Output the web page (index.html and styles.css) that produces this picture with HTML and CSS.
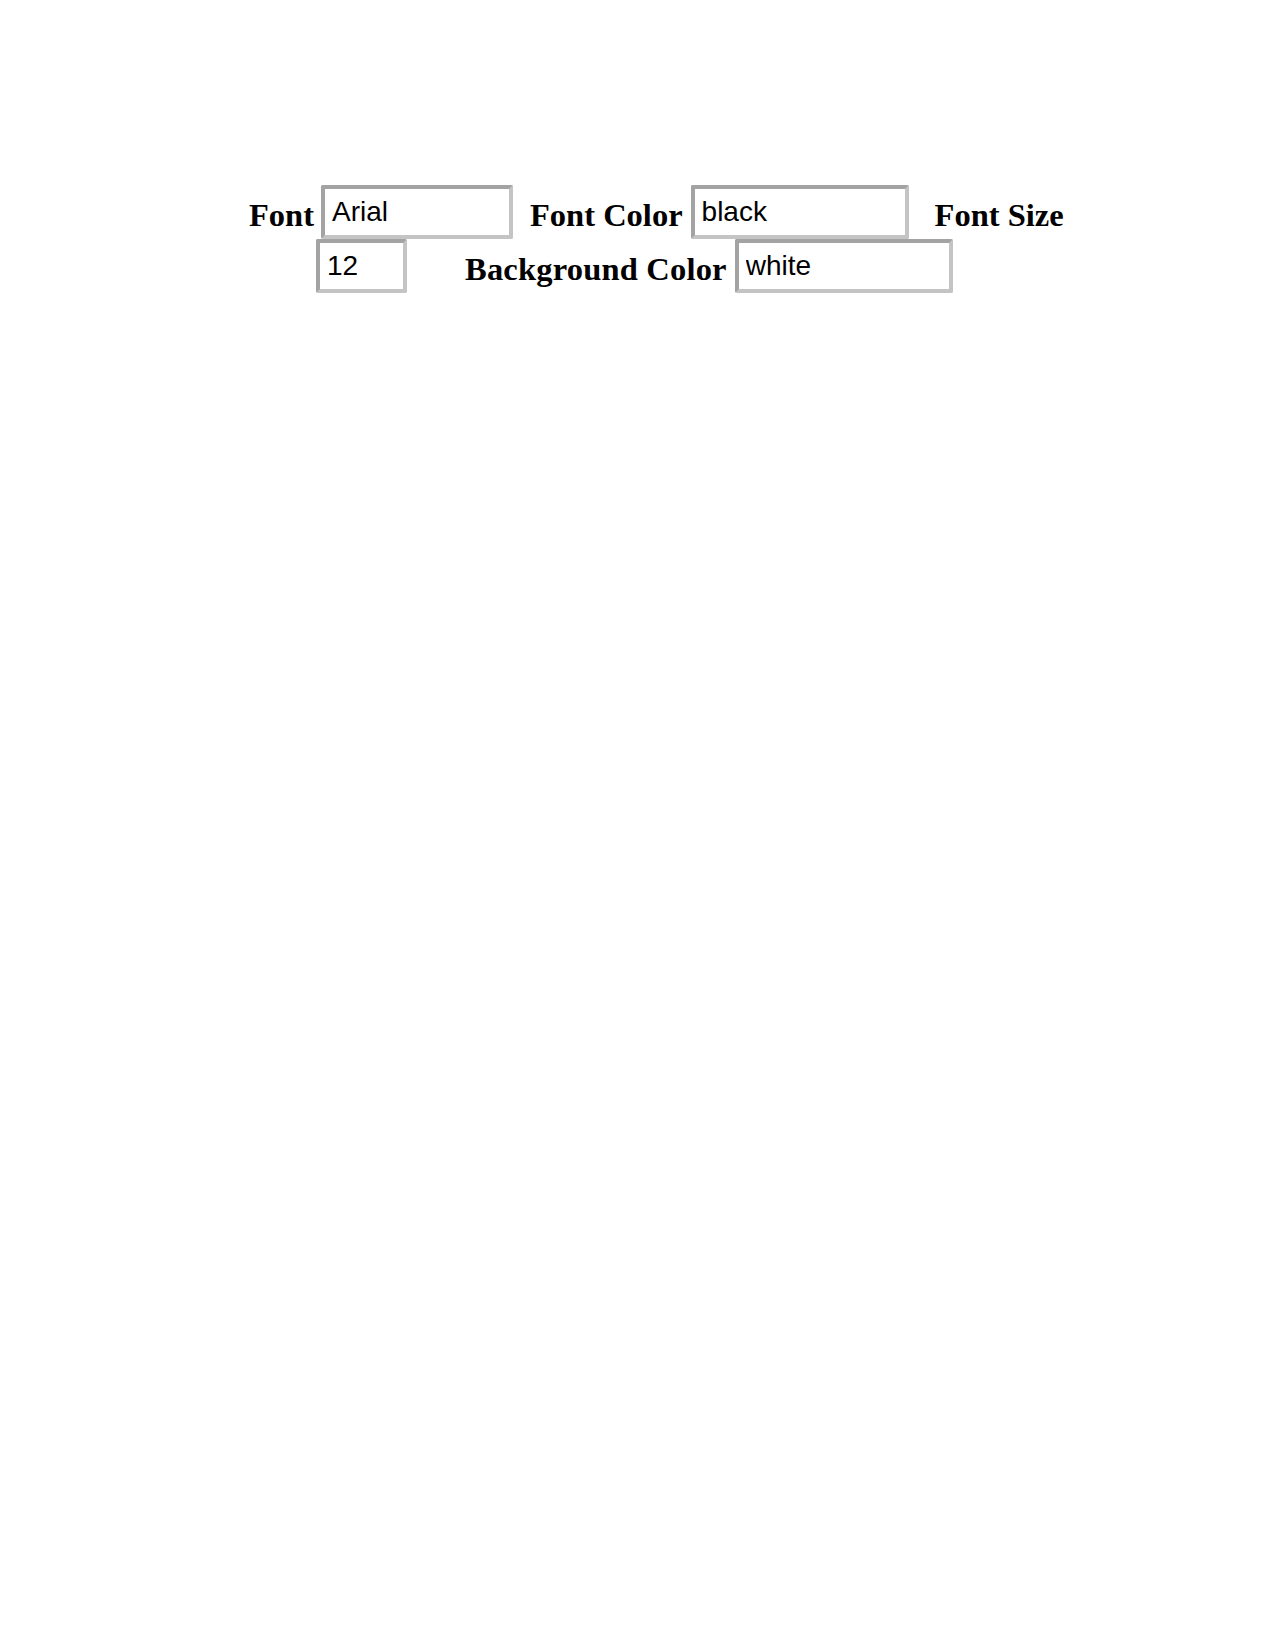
FILE: index.html
```html
<!DOCTYPE html>
<html>
<head>
<meta charset="utf-8">
<title>Text settings</title>
<link rel="stylesheet" href="styles.css">
</head>
<body>
<form class="settings">
  <div class="row row-first">
    <label class="field-label" for="font">Font</label>
    <input class="field field-font" id="font" type="text" value="Arial">
    <label class="field-label label-color" for="color">Font Color</label>
    <input class="field field-color" id="color" type="text" value="black">
    <label class="field-label label-size" for="size">Font Size</label>
  </div>
  <div class="row row-second">
    <input class="field field-size" id="size" type="text" value="12">
    <label class="field-label label-bg" for="bg">Background Color</label>
    <input class="field field-bg" id="bg" type="text" value="white">
  </div>
</form>
</body>
</html>
```
FILE: styles.css
```css
html, body {
  margin: 0;
  padding: 0;
  background: #ffffff;
}

.settings {
  padding-top: 185px;
  font-family: "Liberation Serif", "Times New Roman", serif;
  color: #000;
}

.row {
  display: flex;
  align-items: flex-start;
  height: 54px;
}

.row-first {
  padding-left: 249px;
}

.row-second {
  padding-left: 316px;
}

.field-label {
  font-weight: bold;
  font-size: 32.5px;
  line-height: 60px;
  white-space: nowrap;
}

.field {
  box-sizing: border-box;
  height: 54px;
  margin: 0;
  padding: 7px 7px;
  font-family: "Liberation Sans", Arial, sans-serif;
  font-size: 28px;
  line-height: 32px;
  color: #000;
  background: #fff;
  border: 4px solid;
  border-color: #a3a3a3 #c4c4c4 #c4c4c4 #a3a3a3;
  border-radius: 2px;
  outline: none;
}

.field-font {
  width: 192px;
  margin-left: 7px;
}

.label-color {
  margin-left: 17px;
}

.field-color {
  width: 218px;
  margin-left: 8px;
}

.label-size {
  margin-left: 26px;
}

.field-size {
  width: 91px;
}

.label-bg {
  margin-left: 58px;
  letter-spacing: 0.2px;
}

.field-bg {
  width: 218px;
  margin-left: 8px;
}
```
